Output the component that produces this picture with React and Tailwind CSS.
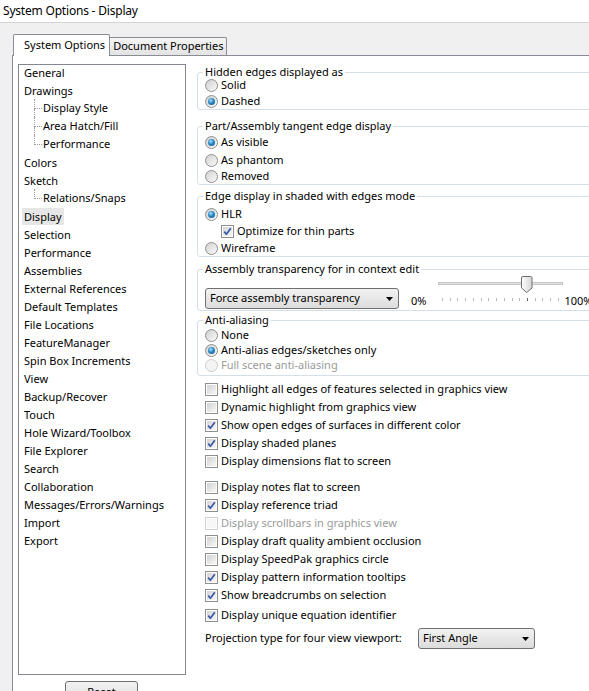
import React from "react";

// SolidWorks "System Options - Display" dialog, Win7 classic look.
const TREE = [
  { label: "General" },
  { label: "Drawings" },
  { label: "Display Style", child: true },
  { label: "Area Hatch/Fill", child: true },
  { label: "Performance", child: true, last: true },
  { label: "Colors" },
  { label: "Sketch" },
  { label: "Relations/Snaps", child: true, last: true },
  { label: "Display", selected: true },
  { label: "Selection" },
  { label: "Performance" },
  { label: "Assemblies" },
  { label: "External References" },
  { label: "Default Templates" },
  { label: "File Locations" },
  { label: "FeatureManager" },
  { label: "Spin Box Increments" },
  { label: "View" },
  { label: "Backup/Recover" },
  { label: "Touch" },
  { label: "Hole Wizard/Toolbox" },
  { label: "File Explorer" },
  { label: "Search" },
  { label: "Collaboration" },
  { label: "Messages/Errors/Warnings" },
  { label: "Import" },
  { label: "Export" },
];

const CHECKS_A = [
  { label: "Highlight all edges of features selected in graphics view" },
  { label: "Dynamic highlight from graphics view" },
  { label: "Show open edges of surfaces in different color", checked: true },
  { label: "Display shaded planes", checked: true },
  { label: "Display dimensions flat to screen" },
];

const CHECKS_B = [
  { label: "Display notes flat to screen" },
  { label: "Display reference triad", checked: true },
  { label: "Display scrollbars in graphics view", disabled: true },
  { label: "Display draft quality ambient occlusion" },
  { label: "Display SpeedPak graphics circle" },
  { label: "Display pattern information tooltips", checked: true },
  { label: "Show breadcrumbs on selection", checked: true },
];

function Radio({ checked, disabled }) {
  return (
    <span
      className={`w-[13px] h-[13px] rounded-full border shrink-0 flex items-center justify-center ${
        disabled
          ? "border-[#cdcdcd] bg-[#f4f4f4]"
          : "border-[#8e8f8f] bg-linear-to-br from-[#cfcfcf] to-[#fbfbfb]"
      }`}
    >
      {checked && (
        <span className="w-[7px] h-[7px] rounded-full bg-[radial-gradient(circle_at_40%_35%,#a8e2fb_0%,#2a86c4_45%,#0c4d84_100%)]" />
      )}
    </span>
  );
}

function Check({ checked, disabled }) {
  return (
    <span
      className={`w-[13px] h-[13px] border shrink-0 flex items-center justify-center ${
        disabled ? "border-[#d2d2d2] bg-white" : "border-[#8e8f8f] bg-white"
      }`}
    >
      <span
        className={`w-[9px] h-[9px] flex items-center justify-center ${
          disabled ? "bg-[#f7f7f7]" : "bg-linear-to-br from-[#d2d2d2] to-[#f7f7f7]"
        }`}
      >
        {checked && (
          <svg width="9" height="9" viewBox="0 0 9 9">
            <path d="M1.2 4.6 L3.4 7.2 L7.8 1.2" fill="none" stroke="#3c57a8" strokeWidth="1.7" strokeLinejoin="round" />
          </svg>
        )}
      </span>
    </span>
  );
}

function RadioRow({ label, checked, disabled, className = "h-[16px]" }) {
  return (
    <div className={`flex items-center gap-[3px] ${disabled ? "text-[#9a9a9a]" : ""} ${className}`}>
      <Radio checked={checked} disabled={disabled} />
      <span>{label}</span>
    </div>
  );
}

function CheckRow({ label, checked, disabled, className = "" }) {
  return (
    <div className={`flex items-center gap-[3px] h-[18px] ${disabled ? "text-[#9a9a9a]" : ""} ${className}`}>
      <Check checked={checked} disabled={disabled} />
      <span>{label}</span>
    </div>
  );
}

function Group({ title, children, className = "" }) {
  return (
    <fieldset className={`w-[400px] border border-[#d5dfe5] rounded-[3px] ${className}`}>
      <legend className="ml-[5px] px-[2px] leading-[12px]">{title}</legend>
      <div className="pl-[7px]">{children}</div>
    </fieldset>
  );
}

function Combo({ label, className = "" }) {
  return (
    <div
      className={`h-[21px] border border-[#707070] rounded-[3px] bg-linear-to-b from-[#f2f2f2] to-[#dcdcdc] flex items-center pl-[4px] pr-[5px] ${className}`}
    >
      <span className="flex-1">{label}</span>
      <svg width="7" height="4" viewBox="0 0 7 4">
        <path d="M0 0 H7 L3.5 4 Z" fill="#000" />
      </svg>
    </div>
  );
}

function Slider() {
  const ticks = Array.from({ length: 16 }, (_, i) => 11 + i * 7.73);
  return (
    <svg width="133" height="30" viewBox="0 0 133 30" className="ml-[5px] shrink-0">
      <defs>
        <linearGradient id="thumb" x1="0" y1="0" x2="1" y2="0">
          <stop offset="0" stopColor="#fdfdfd" />
          <stop offset="1" stopColor="#d6d6d6" />
        </linearGradient>
      </defs>
      <rect x="7.5" y="7.5" width="124" height="2" fill="#e6e6e6" stroke="#c2c2c2" />
      {ticks.map((x, i) => (
        <line key={i} x1={Math.round(x) + 0.5} x2={Math.round(x) + 0.5} y1="23" y2="26" stroke={i === 11 ? "#606060" : "#b8b8b8"} />
      ))}
      <path d="M90.5 3 Q90.5 1.5 92 1.5 H99.5 Q101 1.5 101 3 V13 L95.75 17.5 L90.5 13 Z" fill="url(#thumb)" stroke="#707070" />
    </svg>
  );
}

function TreeRow({ item }) {
  if (item.child) {
    return (
      <div className="h-[18px] flex items-stretch">
        <div className="w-[14px] shrink-0" />
        <div className="w-[8px] shrink-0 flex flex-col">
          <div className="h-[10px] border-l border-b border-dotted border-[#9a9a9a]" />
          {!item.last && <div className="flex-1 border-l border-dotted border-[#9a9a9a]" />}
        </div>
        <span className="ml-px self-center">{item.label}</span>
      </div>
    );
  }
  return (
    <div className="h-[18px] flex items-center pl-[2px]">
      <span className={`px-[2px] leading-[17px] ${item.selected ? "bg-[#e6e6e6]" : ""}`}>{item.label}</span>
    </div>
  );
}

export default function App() {
  return (
    <div className="w-[589px] h-[691px] overflow-hidden flex flex-col bg-[#f0f0f0] text-[11px] text-black font-['Noto_Sans',sans-serif]">
      <div className="h-[23px] shrink-0 bg-white border-b border-[#d4d4d4] px-[3px] flex items-center text-[12px] tracking-[-0.2px]">
        System Options - Display
      </div>

      <div className="flex-1 flex flex-col pl-[12px] pt-[11px]">
        {/* Tabs */}
        <div className="h-[21px] flex items-end pl-[1px]">
          <div className="h-[22px] -mb-px relative z-10 bg-white border border-b-0 border-[#898c95] rounded-t-[2px] pl-[10px] pr-[4px] flex items-center">
            System Options
          </div>
          <div className="h-[18px] bg-linear-to-b from-[#f5f5f5] to-[#e3e3e3] border border-l-0 border-b-0 border-[#898c95] rounded-tr-[2px] px-[3px] flex items-center">
            Document Properties
          </div>
        </div>

        {/* Tab panel */}
        <div className="flex-1 bg-white border-l border-t border-[#898c95] flex">
          <div className="ml-[5px] mt-[8px] flex flex-col shrink-0">
            <div className="w-[168px] h-[611px] border border-[#828790] bg-white pl-px">
              <div className="-mt-[2px] flex flex-col">
                {TREE.map((item, i) => (
                  <TreeRow key={i} item={item} />
                ))}
              </div>
            </div>
            <div className="ml-[47px] mt-[6px] w-[73px] h-[23px] border border-[#707070] rounded-[3px] bg-linear-to-b from-[#f2f2f2] to-[#dcdcdc] flex items-center justify-center">
              Reset
            </div>
          </div>

          <div className="ml-[11px] mt-[10px] flex flex-col shrink-0">
            <Group title="Hidden edges displayed as">
              <RadioRow label="Solid" className="h-[15px]" />
              <RadioRow label="Dashed" checked />
            </Group>

            <Group title="Part/Assembly tangent edge display" className="mt-[10px]">
              <RadioRow label="As visible" checked className="h-[16px] mt-[2px]" />
              <RadioRow label="As phantom" className="h-[16px] mt-[2px]" />
              <RadioRow label="Removed" />
            </Group>

            <Group title="Edge display in shaded with edges mode" className="mt-[5px]">
              <RadioRow label="HLR" checked className="h-[16px] mt-[4px]" />
              <div className="flex items-center gap-[3px] h-[16px] mt-px ml-[16px]">
                <Check checked />
                <span>Optimize for thin parts</span>
              </div>
              <RadioRow label="Wireframe" className="h-[16px] mt-px" />
            </Group>

            <Group title="Assembly transparency for in context edit" className="mt-[6px]">
              <div className="h-[35px] flex items-start">
                <Combo label="Force assembly transparency" className="w-[194px] mt-[13px] shrink-0" />
                <span className="ml-[12px] mt-[18px] leading-[16px]">0%</span>
                <Slider />
                <span className="mt-[18px] leading-[16px]">100%</span>
              </div>
            </Group>

            <Group title="Anti-aliasing" className="mt-[3px]">
              <div className="pt-[2px] pb-[2px]">
                <RadioRow label="None" className="h-[15px]" />
                <RadioRow label="Anti-alias edges/sketches only" checked className="h-[15px]" />
                <RadioRow label="Full scene anti-aliasing" disabled className="h-[15px]" />
              </div>
            </Group>

            <div className="pl-[8px] mt-[4px] flex flex-col">
              {CHECKS_A.map((c) => (
                <CheckRow key={c.label} {...c} />
              ))}
              <div className="mt-[8px] flex flex-col">
                {CHECKS_B.map((c) => (
                  <CheckRow key={c.label} {...c} />
                ))}
              </div>
              <CheckRow label="Display unique equation identifier" checked className="mt-[2px]" />
              <div className="mt-[4px] flex items-center">
                <span className="w-[213px] shrink-0 whitespace-nowrap">Projection type for four view viewport:</span>
                <Combo label="First Angle" className="w-[117px]" />
              </div>
            </div>
          </div>
        </div>
      </div>
    </div>
  );
}
